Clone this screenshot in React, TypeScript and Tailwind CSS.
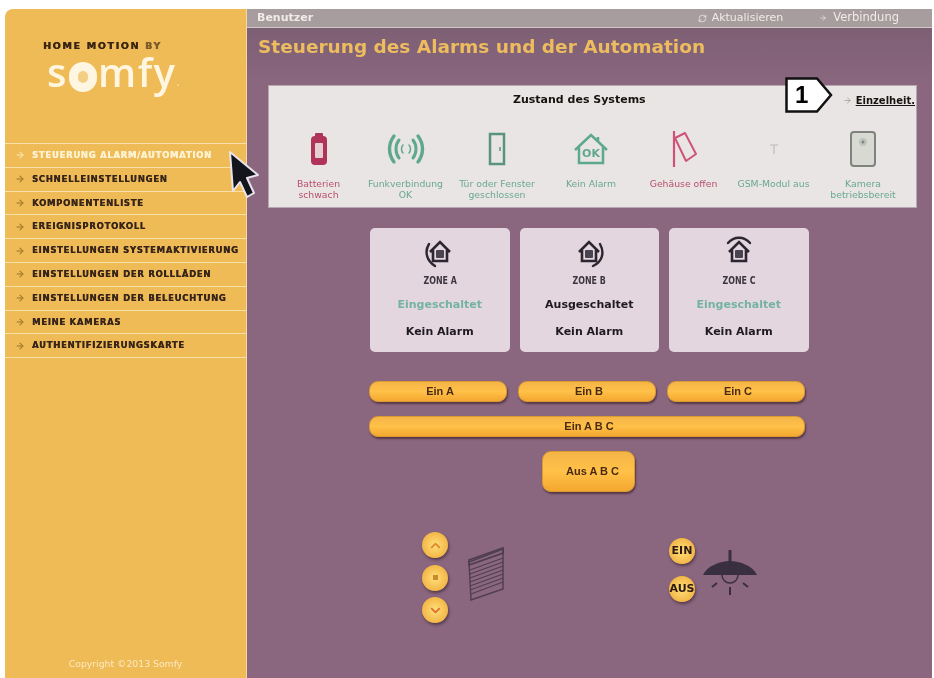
import { ArrowRight, ChevronDown, ChevronUp, RefreshCw } from 'lucide-react';

const MENU = [
  'Steuerung Alarm/Automation',
  'Schnelleinstellungen',
  'Komponentenliste',
  'Ereignisprotokoll',
  'Einstellungen Systemaktivierung',
  'Einstellungen der Rollläden',
  'Einstellungen der Beleuchtung',
  'Meine Kameras',
  'Authentifizierungskarte',
];

function Battery() {
  return (
    <svg width="20" height="34" viewBox="0 0 20 34">
      <rect x="6" y="1" width="8" height="4" rx="1" fill="#b0335a" />
      <rect x="2" y="4" width="16" height="29" rx="4" fill="#b0335a" />
      <rect x="6" y="11" width="8" height="15" rx="1" fill="#e6cfd3" />
    </svg>
  );
}

function Waves() {
  return (
    <svg width="42" height="32" viewBox="0 0 42 32" fill="none" stroke="#5ea88f" strokeLinecap="round">
      <path d="M9 3C3 11 3 21 9 29" strokeWidth="3.4" />
      <path d="M14 7C10 12 10 20 14 25" strokeWidth="3" />
      <path d="M18 12C16 14 16 18 18 20" strokeWidth="1.5" />
      <path d="M24 12C26 14 26 18 24 20" strokeWidth="1.5" />
      <path d="M28 7C32 12 32 20 28 25" strokeWidth="3" />
      <path d="M33 3C39 11 39 21 33 29" strokeWidth="3.4" />
    </svg>
  );
}

function Door() {
  return (
    <svg width="18" height="34" viewBox="0 0 18 34" fill="none" stroke="#5a937f" strokeWidth="2.5">
      <rect x="2" y="2" width="14" height="30" />
      <path d="M12 15v4" strokeWidth="1.5" />
    </svg>
  );
}

function HouseOk() {
  return (
    <svg width="36" height="32" viewBox="0 0 36 32">
      <path d="M2 17 18 2l16 15M6 14v16h24V14M25 4v5" fill="none" stroke="#5ea88f" strokeWidth="2.5" />
      <text x="18" y="24" textAnchor="middle" fontSize="11" fontWeight="700" fontFamily="DejaVu Sans" fill="#5ea88f">OK</text>
    </svg>
  );
}

function OpenCase() {
  return (
    <svg width="26" height="38" viewBox="0 0 26 38" fill="none" stroke="#cf5278">
      <path d="M3 1v36" strokeWidth="2.2" />
      <path d="M4 8 14 3l11 21-10 7z" strokeWidth="2" strokeLinejoin="round" />
    </svg>
  );
}

function Antenna() {
  return (
    <svg width="12" height="12" viewBox="0 0 12 12" fill="none" stroke="#bdbab6">
      <path d="M2 2h8M6 2v9" strokeWidth="1.2" />
    </svg>
  );
}

function Camera() {
  return (
    <svg width="26" height="36" viewBox="0 0 26 36">
      <rect x="1" y="1" width="24" height="34" rx="3" fill="#d9d9d4" stroke="#7f837d" strokeWidth="2" />
      <circle cx="13" cy="11" r="4" fill="#bfc4bf" />
      <circle cx="13" cy="11" r="1.5" fill="#7f8884" />
    </svg>
  );
}

const STATUS = [
  { width: 'w-[85px]', color: 'text-[#b8506d]', icon: <Battery />, label: ['Batterien', 'schwach'] },
  { width: 'w-[89px]', color: 'text-[#6aa893]', icon: <Waves />, label: ['Funkverbindung', 'OK'] },
  { width: 'w-[94px]', color: 'text-[#6aa893]', icon: <Door />, label: ['Tür oder Fenster', 'geschlossen'] },
  { width: 'w-[94px]', color: 'text-[#6aa893]', icon: <HouseOk />, label: ['Kein Alarm'] },
  { width: 'w-[91px]', color: 'text-[#b8506d]', icon: <OpenCase />, label: ['Gehäuse offen'] },
  { width: 'w-[89px]', color: 'text-[#6aa893]', icon: <Antenna />, label: ['GSM-Modul aus'] },
  { width: 'w-[90px]', color: 'text-[#6aa893]', icon: <Camera />, label: ['Kamera', 'betriebsbereit'] },
];

function ZoneIcon({ arc }: { arc: string }) {
  return (
    <svg width="32" height="32" viewBox="0 0 32 32">
      <path d="M6 16 16 6l10 10M9 14v11h14V14" fill="none" stroke="#2c2630" strokeWidth="2.6" />
      <rect x="12" y="14" width="8" height="8" rx="1" fill="#4a4350" />
      <path d={arc} fill="none" stroke="#2c2630" strokeWidth="2.4" strokeLinecap="round" />
    </svg>
  );
}

const ZONES = [
  { name: 'ZONE A', on: true, arc: 'M5 8C0 16 3 25 11 30' },
  { name: 'ZONE B', on: false, arc: 'M27 8C32 17 29 26 20 30' },
  { name: 'ZONE C', on: true, arc: 'M5 7C11 0 21 0 27 7' },
];

const pill =
  "flex items-center justify-center rounded-[9px] border border-[#d99a32] bg-linear-to-b from-[#f5b548] via-[#ffc148] to-[#f4a72f] pl-[4px] font-['Liberation_Sans',sans-serif] font-bold text-[11px] text-[#4a2a12] shadow-[1px_2px_2px_rgba(60,30,40,0.65)]";

const round =
  "flex h-[26px] w-[26px] items-center justify-center rounded-full bg-radial from-[#ffdf78] to-[#eca52b] shadow-[1px_2px_3px_rgba(50,30,40,0.6)]";

function Shutter() {
  return (
    <svg width="36" height="54" viewBox="0 0 36 54" fill="none" stroke="#4f3e50">
      <path d="M1 15 35 2v40L3 53z" strokeWidth="1.4" />
      <path d="M1 13 35 1v5L1 18z" strokeWidth="1.8" />
      <path d="M2 23 35 11M2 27 35 15M2 31 35 19M2 35 35 23M2 39 35 27M2 43 35 31M3 47 35 35" strokeWidth="1.1" />
    </svg>
  );
}

function Lamp() {
  return (
    <svg width="56" height="46" viewBox="0 0 56 46">
      <rect x="26.5" y="0" width="3" height="12" fill="#3a2f40" />
      <path d="M1 25C5 16 18 11 28 11s23 5 27 14z" fill="#3a2f40" />
      <path d="M20 25a8 8 0 0 0 16 0" fill="none" stroke="#3a2f40" strokeWidth="1.5" />
      <path d="M28 37v8M15 33l-5 4M41 33l5 4" stroke="#3a2f40" strokeWidth="2" />
    </svg>
  );
}

export default function App() {
  return (
    <div className="flex h-[678px] w-[934px] overflow-hidden bg-white pt-[9px] pl-[5px] pr-[2px] font-['DejaVu_Sans',sans-serif] blur-[0.5px]">
      <aside className="flex w-[242px] shrink-0 flex-col rounded-tl-lg border-r border-[#f6d9a0] bg-[#efbb56]">
        <div className="h-[134px] pl-[38px] pt-[30px]">
          <p className="text-[9.5px] font-bold tracking-[1.65px] text-[#3a2414] [text-shadow:0.4px_0_0_currentColor]">
            HOME MOTION <span className="text-[#7d5a2c]">BY</span>
          </p>
          <p className="mt-[4px] flex items-center pl-[4px] font-['Open_Sans',sans-serif] text-[40px] leading-[26px] font-semibold tracking-[1.5px] text-[#fff6e2]">
            s
            <span className="mx-[1px] inline-block h-[30px] w-[28px] shrink-0 translate-y-[5px] rounded-full border-[9px] border-[#fff6e2] bg-[#f3cf86]" />
            mfy<span className="translate-y-[10px] text-[10px] text-[#f8e4b4]">.</span>
          </p>
        </div>

        <ul className="border-b border-[#f8e0a8]">
          {MENU.map((item, i) => (
            <li key={item} className="flex h-[23.8px] items-center border-t border-[#f8e0a8] pl-[10px]">
              <ArrowRight size={10} strokeWidth={2.5} className={i === 0 ? 'text-[#fbe6b5]' : 'text-[#9a7428]'} />
              <span className={`ml-[7px] text-[8.5px] font-bold tracking-[0.7px] whitespace-nowrap uppercase [text-shadow:0.3px_0_0_currentColor] ${i === 0 ? 'text-[#fdf2d2]' : 'text-[#37241a]'}`}>
                {item}
              </span>
            </li>
          ))}
        </ul>

        <p className="mt-auto pb-[7px] text-center text-[9.3px] text-[#fbeac2]">Copyright ©2013 Somfy</p>
      </aside>

      <main className="flex-1 bg-[#8a677f]">
        <header className="flex h-[19px] items-center border-b border-[#d3c6c6] bg-[#a89d9e] pl-[10px] text-[11px] text-[#f0ebe8]">
          <span className="font-bold">Benutzer</span>
          <span className="ml-auto flex items-center gap-[5px]">
            <RefreshCw size={9} />
            Aktualisieren
          </span>
          <span className="mr-[33px] ml-[36px] flex items-center gap-[6px]">
            <ArrowRight size={8} />
            <span className="text-[11.5px]">Verbindung</span>
          </span>
        </header>

        <div className="h-[57px] bg-linear-to-b from-[#7d5f74] to-[#8a677f] pl-[11px] pt-[8px]">
          <h1 className="text-[18.5px] leading-[22px] font-bold text-[#edbc5e]">Steuerung des Alarms und der Automation</h1>
        </div>

        <section className="ml-[21px] h-[123px] w-[649px] border border-[#b9a6b3] bg-[#e9e5e4]">
          <div className="flex items-center pt-[6px]">
            <h2 className="ml-[244px] text-[11px] font-bold text-[#17130f]">Zustand des Systems</h2>
            <span className="ml-auto flex items-center gap-[4px] pr-[1px] text-[10px] font-bold text-[#17130f]">
              <ArrowRight size={9} className="text-[#9e9a96]" />
              <span className="underline">Einzelheit.</span>
            </span>
          </div>
          <div className="mt-[19px] flex pl-[7px]">
            {STATUS.map(s => (
              <div key={s.label[0]} className={`${s.width} flex flex-col items-center`}>
                <div className="flex h-[42px] items-center justify-center">{s.icon}</div>
                <p className={`mt-[8px] text-center text-[9.3px] leading-[11px] whitespace-nowrap ${s.color}`}>
                  {s.label.map(line => (
                    <span key={line} className="block">{line}</span>
                  ))}
                </p>
              </div>
            ))}
          </div>
        </section>

        <div className="mt-[20px] ml-[123px] flex gap-[10px]">
          {ZONES.map(z => (
            <div key={z.name} className="flex h-[124px] w-[139.5px] flex-col items-center rounded-[5px] bg-[#e3d6df] pt-[8px]">
              <ZoneIcon arc={z.arc} />
              <p className="mt-[6px] scale-x-[0.72] text-[11px] leading-[13px] font-bold text-[#3d3640]">{z.name}</p>
              <p className={`mt-[10px] text-[11px] leading-[15px] font-bold ${z.on ? 'text-[#74b49f]' : 'text-[#1e1a20]'}`}>
                {z.on ? 'Eingeschaltet' : 'Ausgeschaltet'}
              </p>
              <p className="mt-[12px] text-[11px] leading-[15px] font-bold text-[#1e1a20]">Kein Alarm</p>
            </div>
          ))}
        </div>

        <div className="mt-[29px] ml-[122px] w-[436px]">
          <div className="flex gap-[11px]">
            <button className={`${pill} h-[21px] w-[138px]`}>Ein A</button>
            <button className={`${pill} h-[21px] w-[138px]`}>Ein B</button>
            <button className={`${pill} h-[21px] w-[138px]`}>Ein C</button>
          </div>
          <button className={`${pill} mt-[14px] h-[21px] w-full`}>Ein A B C</button>
          <button className={`${pill} mt-[14px] ml-[173px] h-[41px] w-[93px] pl-[8px]`}>Aus A B C</button>
        </div>

        <div className="mt-[40px] ml-[175px] flex items-start">
          <div className="flex flex-col gap-[6.5px]">
            <button className={round}><ChevronUp size={15} strokeWidth={3} className="text-[#e08a2c]" /></button>
            <button className={round}><span className="h-[5px] w-[5px] bg-[#c98a2a]" /></button>
            <button className={round}><ChevronDown size={15} strokeWidth={3} className="text-[#e0702c]" /></button>
          </div>
          <div className="mt-[15px] ml-[20px]"><Shutter /></div>
          <div className="mt-[6px] ml-[165px] flex flex-col gap-[12px]">
            <button className={`${round} text-[11px] font-bold text-[#2c1a10]`}>EIN</button>
            <button className={`${round} text-[11px] font-bold text-[#2c1a10]`}>AUS</button>
          </div>
          <div className="mt-[18px] ml-[7px]"><Lamp /></div>
        </div>
      </main>

      <div className="absolute top-[77px] left-[785px] flex h-[36px] w-[48px] items-center">
        <svg className="absolute inset-0" width="48" height="36" viewBox="0 0 48 36">
          <path d="M1.5 1.5H32L46 18 32 34.5H1.5z" fill="#fff" stroke="#111" strokeWidth="2.5" />
        </svg>
        <span className="relative ml-[10px] font-['Liberation_Sans',sans-serif] text-[24px] font-bold text-black">1</span>
      </div>

      <svg className="absolute top-[149px] left-[226px]" width="38" height="52" viewBox="0 0 38 52">
        <path d="M4 3 7 42l7-9 7 15 7-4-7-15 11-3z" fill="#14141c" stroke="#e8e4ec" strokeWidth="2" strokeLinejoin="round" />
      </svg>
    </div>
  );
}
